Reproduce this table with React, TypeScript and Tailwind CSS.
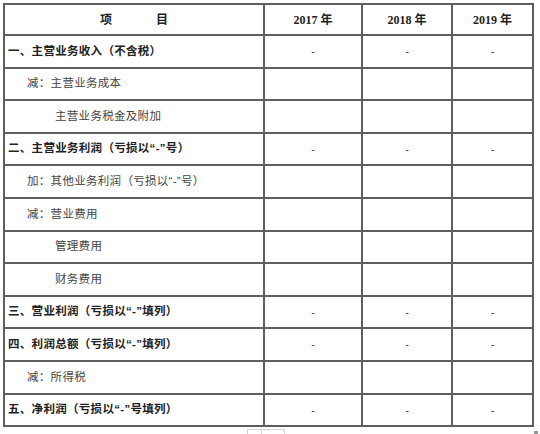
import React from 'react';

type Row = {
  label: string;
  indent: 0 | 1 | 2;
  bold?: boolean;
  dash?: boolean;
};

const rows: Row[] = [
  { label: '一、主营业务收入（不含税）', indent: 0, bold: true, dash: true },
  { label: '减：主营业务成本', indent: 1 },
  { label: '主营业务税金及附加', indent: 2 },
  { label: '二、主营业务利润（亏损以“-”号）', indent: 0, bold: true, dash: true },
  { label: '加：其他业务利润（亏损以“-”号）', indent: 1 },
  { label: '减：营业费用', indent: 1 },
  { label: '管理费用', indent: 2 },
  { label: '财务费用', indent: 2 },
  { label: '三、营业利润（亏损以“-”填列）', indent: 0, bold: true, dash: true },
  { label: '四、利润总额（亏损以“-”填列）', indent: 0, bold: true, dash: true },
  { label: '减：所得税', indent: 1 },
  { label: '五、净利润（亏损以“-”号填列）', indent: 0, bold: true, dash: true },
];

const years = ['2017 年', '2018 年', '2019 年'];

const cell = 'border-r-2 border-b-2 border-[#5e5e5e] flex items-center';
const indentCls = ['pl-[3px]', 'pl-[22px]', 'pl-[50px]'];

export default function App() {
  return (
    <div className="w-[540px] h-[434px] bg-white overflow-hidden pt-[3px] pl-[3px] font-['Liberation_Sans','Noto_Sans_CJK_SC',sans-serif]">
      <div className="grid grid-cols-[260px_98px_90px_81px] grid-rows-[31px_repeat(12,32.6px)] border-l-2 border-t-2 border-[#5e5e5e] w-[531px]">
        {/* header */}
        <div className={`${cell} justify-center gap-[44px] text-[12px] font-bold text-[#222]`}>
          <span>项</span>
          <span>目</span>
        </div>
        {years.map((y) => (
          <div
            key={y}
            className={`${cell} justify-center text-[12px] font-bold text-[#222] font-['Liberation_Serif','Noto_Sans_CJK_SC',serif]`}
          >
            {y}
          </div>
        ))}

        {rows.map((r, i) => (
          <React.Fragment key={i}>
            <div
              className={`${cell} ${indentCls[r.indent]} text-[11.5px] tracking-[0.3px] ${
                r.bold ? 'font-bold text-[#222]' : 'text-[#444]'
              }`}
            >
              {r.label}
            </div>
            {years.map((y) => (
              <div key={y} className={`${cell} justify-center text-[11px] text-[#444]`}>
                {r.dash ? '-' : ''}
              </div>
            ))}
          </React.Fragment>
        ))}
      </div>
      <div className="flex justify-between pl-[244px] pr-[2px] pt-[2px]">
        <div className="w-[38px] h-[8px] border border-[#d4d4d4] flex">
          <div className="w-[14px] border-r border-[#d4d4d4]" />
        </div>
        <div className="w-[4px] h-[4px] bg-[#999] mt-[2px]" />
      </div>
    </div>
  );
}
